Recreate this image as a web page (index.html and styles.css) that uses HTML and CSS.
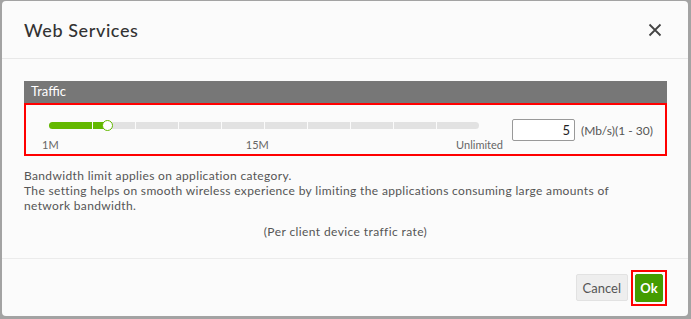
FILE: index.html
```html
<!DOCTYPE html>
<html lang="en">
<head>
    <meta charset="UTF-8">
    <meta name="viewport" content="width=device-width, initial-scale=1.0">
    <title>Web Services</title>
    <link rel="stylesheet" href="styles.css">
</head>
<body>
    <div class="modal">
        <div class="modal-header">
            <h1>Web Services</h1>
            <button class="close-button" aria-label="Close">
                <svg width="14" height="14" viewBox="0 0 14 14">
                    <path d="M1.5 1.5 L12.5 12.5 M12.5 1.5 L1.5 12.5" stroke="#444" stroke-width="1.8" fill="none"/>
                </svg>
            </button>
        </div>

        <div class="modal-body">
            <div class="section-title">Traffic</div>
            <div class="traffic-box">
                <div class="slider">
                    <div class="slider-track">
                        <div class="slider-fill" style="width: 58px;"></div>
                        <div class="ticks">
                            <span></span><span></span><span></span><span></span><span></span>
                            <span></span><span></span><span></span><span></span><span></span>
                        </div>
                        <div class="slider-handle" style="left: 58px;"></div>
                    </div>
                    <div class="slider-labels">
                        <span>1M</span>
                        <span>15M</span>
                        <span>Unlimited</span>
                    </div>
                </div>
                <div class="rate">
                    <input class="rate-input" type="text" value="5">
                    <span class="rate-unit">(Mb/s)(1 - 30)</span>
                </div>
            </div>

            <p class="note">Bandwidth limit applies on application category.<br>
                The setting helps on smooth wireless experience by limiting the applications consuming large amounts of network bandwidth.</p>
            <p class="note-center">(Per client device traffic rate)</p>
        </div>

        <div class="modal-footer">
            <button class="btn btn-cancel">Cancel</button>
            <span class="ok-highlight"><button class="btn btn-ok">Ok</button></span>
        </div>
    </div>
</body>
</html>
```

FILE: styles.css
```css
:root {
    --green: #63b800;
    --dark-green: #449c00;
    --red: #ff0000;
    --text: #555;
}

* {
    box-sizing: border-box;
}

body {
    margin: 0;
    height: 319px;
    background-color: #a3a3a3;
    font-family: "Lato", "Noto Sans", sans-serif;
    color: var(--text);
    overflow: hidden;
}

.modal {
    margin: 1px 3px 0 2px;
    height: 315px;
    background-color: #fbfbfb;
    border-radius: 4px;
    display: flex;
    flex-direction: column;
}

.modal-header {
    height: 58px;
    padding: 0 26px 0 22px;
    display: flex;
    align-items: center;
    justify-content: space-between;
    border-bottom: 1px solid #e8e8e8;
}

.modal-header h1 {
    margin: 0;
    font-size: 18px;
    font-weight: 500;
    letter-spacing: 0.6px;
    color: #333;
}

.close-button {
    background: none;
    border: none;
    padding: 0;
    display: flex;
    cursor: pointer;
}

.modal-body {
    flex: 1;
    padding: 22px 21px 0 22px;
}

.section-title {
    height: 22px;
    background-color: #777;
    color: #fff;
    font-size: 13px;
    padding: 2px 7px;
}

.traffic-box {
    height: 53px;
    border: 2px solid var(--red);
    display: flex;
    align-items: flex-start;
    padding: 14px 0 0 23px;
}

.slider {
    width: 430px;
}

.slider-track {
    position: relative;
    height: 7px;
    margin-top: 3px;
    background-color: #e2e2e2;
    border-radius: 4px;
}

.slider-fill {
    height: 100%;
    background-color: var(--green);
    border-radius: 4px 0 0 4px;
}

.ticks {
    position: absolute;
    inset: 0;
    display: grid;
    grid-template-columns: repeat(10, 1fr);
}

.ticks span {
    border-left: 1px solid #fbfbfb;
}

.ticks span:first-child {
    border-left: none;
}

.slider-handle {
    position: absolute;
    top: -2px;
    width: 11px;
    height: 11px;
    margin-left: -5px;
    border-radius: 50%;
    background-color: #fff;
    border: 1.5px solid var(--green);
}

.slider-labels {
    display: flex;
    justify-content: space-between;
    margin: 9px -24px 0 -7px;
    font-size: 11px;
    color: #666;
}

.rate {
    display: flex;
    align-items: center;
    gap: 6px;
    margin-left: 33px;
}

.rate-input {
    width: 63px;
    height: 22px;
    border: 1px solid #999;
    border-radius: 2px;
    font-family: inherit;
    font-size: 13px;
    color: #222;
    text-align: right;
    padding: 0 4px;
}

.rate-unit {
    font-size: 12px;
}

.note {
    margin: 12px 0 0 0;
    padding-right: 40px;
    font-size: 12px;
    line-height: 15px;
    letter-spacing: 0.35px;
}

.note-center {
    margin: 11px 0 0 0;
    font-size: 12px;
    letter-spacing: 0.4px;
    text-align: center;
}

.modal-footer {
    height: 58px;
    border-top: 1px solid #ebebeb;
    display: flex;
    align-items: center;
    justify-content: flex-end;
    gap: 3px;
    padding-right: 21px;
}

.btn {
    font-family: inherit;
    font-size: 13px;
    border-radius: 2px;
    cursor: pointer;
}

.btn-cancel {
    height: 27px;
    padding: 0 6px;
    background-color: #eee;
    border: 1px solid #e2e2e2;
    color: #555;
}

.ok-highlight {
    display: flex;
    border: 2px solid var(--red);
    padding: 2px;
}

.btn-ok {
    height: 28px;
    width: 28px;
    padding: 0;
    background-color: var(--dark-green);
    border: 1px solid var(--dark-green);
    color: #fff;
    font-weight: 700;
}
```
